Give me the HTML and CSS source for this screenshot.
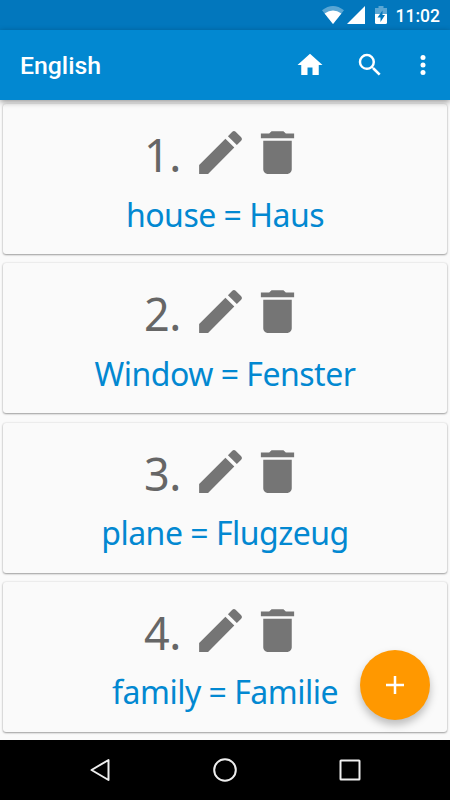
FILE: index.html
```html
<!DOCTYPE html>
<html lang="en">
<head>
<meta charset="utf-8">
<title>English</title>
<link rel="stylesheet" href="styles.css">
</head>
<body>
<svg class="defs" width="0" height="0">
  <symbol id="edit" viewBox="0 0 24 24"><path d="M3 17.25V21h3.75L17.81 9.94l-3.75-3.75L3 17.25zM20.71 7.04a1 1 0 0 0 0-1.41l-2.34-2.34a1 1 0 0 0-1.41 0l-1.83 1.83 3.75 3.75 1.83-1.83z"/></symbol>
  <symbol id="trash" viewBox="0 0 24 24"><path d="M6 19c0 1.100.9 2 2 2h8c1.100 0 2-.9 2-2V7H6v12zM19 4h-3.500l-1-1h-5l-1 1H5v2h14V4z"/></symbol>
</svg>
<div class="screen">
  <div class="status">
    <svg class="wifi" viewBox="0 0 22 18"><path class="dim" d="M0 4.300Q11-4.300 22 4.300L11 18z"/><path d="M2.600 7.500Q11 1.500 19.400 7.500L11 18z"/></svg>
    <svg class="signal" viewBox="0 0 18 18"><path d="M18 0v18H0z"/></svg>
    <svg class="battery" viewBox="0 0 12 18"><path class="dim" d="M0 2h3.500V0h5v2H12v7H0z"/><path d="M0 8h12v8.500q0 1.500-1.500 1.500h-9Q0 18 0 16.500z"/><path class="bolt" d="M7.500 4.500 2.500 11.500h3V16l4.500-7H7.500z"/></svg>
    <span class="clock">11:02</span>
  </div>
  <header class="bar">
    <h1 class="title">English</h1>
    <svg class="action home" viewBox="0 0 24 24"><path d="M10 20v-6h4v6h5v-8h3L12 3 2 12h3v8z"/></svg>
    <svg class="action search" viewBox="0 0 24 24"><path d="M15.500 14h-.79l-.28-.27A6.471 6.471 0 0 0 16 9.500 6.500 6.500 0 1 0 9.500 16c1.610 0 3.090-.59 4.230-1.570l.27.28v.79l5 4.990L20.490 19l-4.990-5zm-6 0C7.010 14 5 11.990 5 9.500S7.010 5 9.500 5 14 7.010 14 9.500 11.990 14 9.500 14z"/></svg>
    <svg class="action more" viewBox="0 0 24 24"><circle cx="12" cy="6" r="2"/><circle cx="12" cy="12" r="2"/><circle cx="12" cy="18" r="2"/></svg>
  </header>
  <main class="list">
    <article class="card">
      <div class="head"><span class="num">1.</span><svg class="tool"><use href="#edit"/></svg><svg class="tool"><use href="#trash"/></svg></div>
      <p class="pair">house = Haus</p>
    </article>
    <article class="card">
      <div class="head"><span class="num">2.</span><svg class="tool"><use href="#edit"/></svg><svg class="tool"><use href="#trash"/></svg></div>
      <p class="pair">Window = Fenster</p>
    </article>
    <article class="card">
      <div class="head"><span class="num">3.</span><svg class="tool"><use href="#edit"/></svg><svg class="tool"><use href="#trash"/></svg></div>
      <p class="pair">plane = Flugzeug</p>
    </article>
    <article class="card">
      <div class="head"><span class="num">4.</span><svg class="tool"><use href="#edit"/></svg><svg class="tool"><use href="#trash"/></svg></div>
      <p class="pair">family = Familie</p>
    </article>
  </main>
  <nav class="nav">
    <svg viewBox="0 0 26 26"><path d="M4.500 13 21.500 3v20z"/></svg>
    <svg viewBox="0 0 26 26"><circle cx="13" cy="13" r="10.800"/></svg>
    <svg viewBox="0 0 26 26"><rect x="3.500" y="3.500" width="19" height="19" rx=".5"/></svg>
  </nav>
  <button class="fab" aria-label="Add"><svg viewBox="0 0 18 18"><path d="M9 0v18M0 9h18"/></svg></button>
</div>
</body>
</html>
```
FILE: styles.css
```css
* { box-sizing: border-box; margin: 0; }
body { font-family: "Noto Sans", sans-serif; }
svg { display: block; flex: none; fill: #fff; }
.defs { position: absolute; }
.screen {
  position: relative;
  display: flex;
  flex-direction: column;
  width: 450px;
  height: 800px;
  overflow: hidden;
  background: #fafafa;
}
.status {
  display: flex;
  align-items: center;
  justify-content: flex-end;
  height: 30px;
  padding-right: 10px;
  background: #0277bd;
  color: #fff;
}
.dim { opacity: .35; }
.wifi { width: 22px; height: 18px; margin-right: 3px; }
.signal { width: 18px; height: 18px; margin-right: 10px; }
.battery { width: 12px; height: 18px; margin-right: 9px; }
.bolt { fill: #0277bd; }
.clock { padding-top: 2px; font: 500 17.5px/30px Roboto, sans-serif; }
.bar {
  position: relative;
  z-index: 1;
  display: flex;
  align-items: center;
  height: 70px;
  padding: 0 12px 0 20px;
  background: #0288d1;
  color: #fff;
  box-shadow: 0 2px 6px rgba(0, 0, 0, .4);
}
.title { flex: 1; padding-top: 2px; font: 500 24.8px/70px Roboto, sans-serif; }
.action { width: 30px; height: 30px; }
.home { margin-right: 30px; }
.search { margin-right: 23px; }
.list {
  flex: 1;
  display: flex;
  flex-direction: column;
  gap: 9.1px;
  min-height: 0;
  padding: 4.4px 3px 0;
}
.card {
  flex: none;
  height: 150px;
  padding-top: 20px;
  border-radius: 3px;
  background: #fafafa;
  box-shadow: 0 1px 2px rgba(0, 0, 0, .35), 0 0 2px rgba(0, 0, 0, .15);
}
.head { display: flex; justify-content: center; height: 57px; }
.num { margin-right: 11px; color: #666; font-size: 45px; line-height: 61px; letter-spacing: -.5px; }
.tool { width: 57px; height: 57px; fill: #757575; }
.pair { color: #0288d1; font-size: 32px; line-height: 44px; letter-spacing: -.5px; margin-top: 11.6px; text-align: center; }
.nav {
  position: relative;
  display: flex;
  align-items: center;
  justify-content: center;
  gap: 99px;
  height: 60px;
  background: #000;
}
.nav svg { width: 26px; height: 26px; fill: none; stroke: #eee; stroke-width: 2; stroke-linejoin: round; }
.fab {
  position: absolute;
  right: 20px;
  bottom: 80px;
  z-index: 2;
  display: flex;
  align-items: center;
  justify-content: center;
  width: 70px;
  height: 70px;
  border: 0;
  border-radius: 50%;
  background: #ff9800;
  box-shadow: 0 5px 9px rgba(0, 0, 0, .25);
}
.fab svg { width: 18px; height: 18px; stroke: #fff; stroke-width: 2.5; }
```
